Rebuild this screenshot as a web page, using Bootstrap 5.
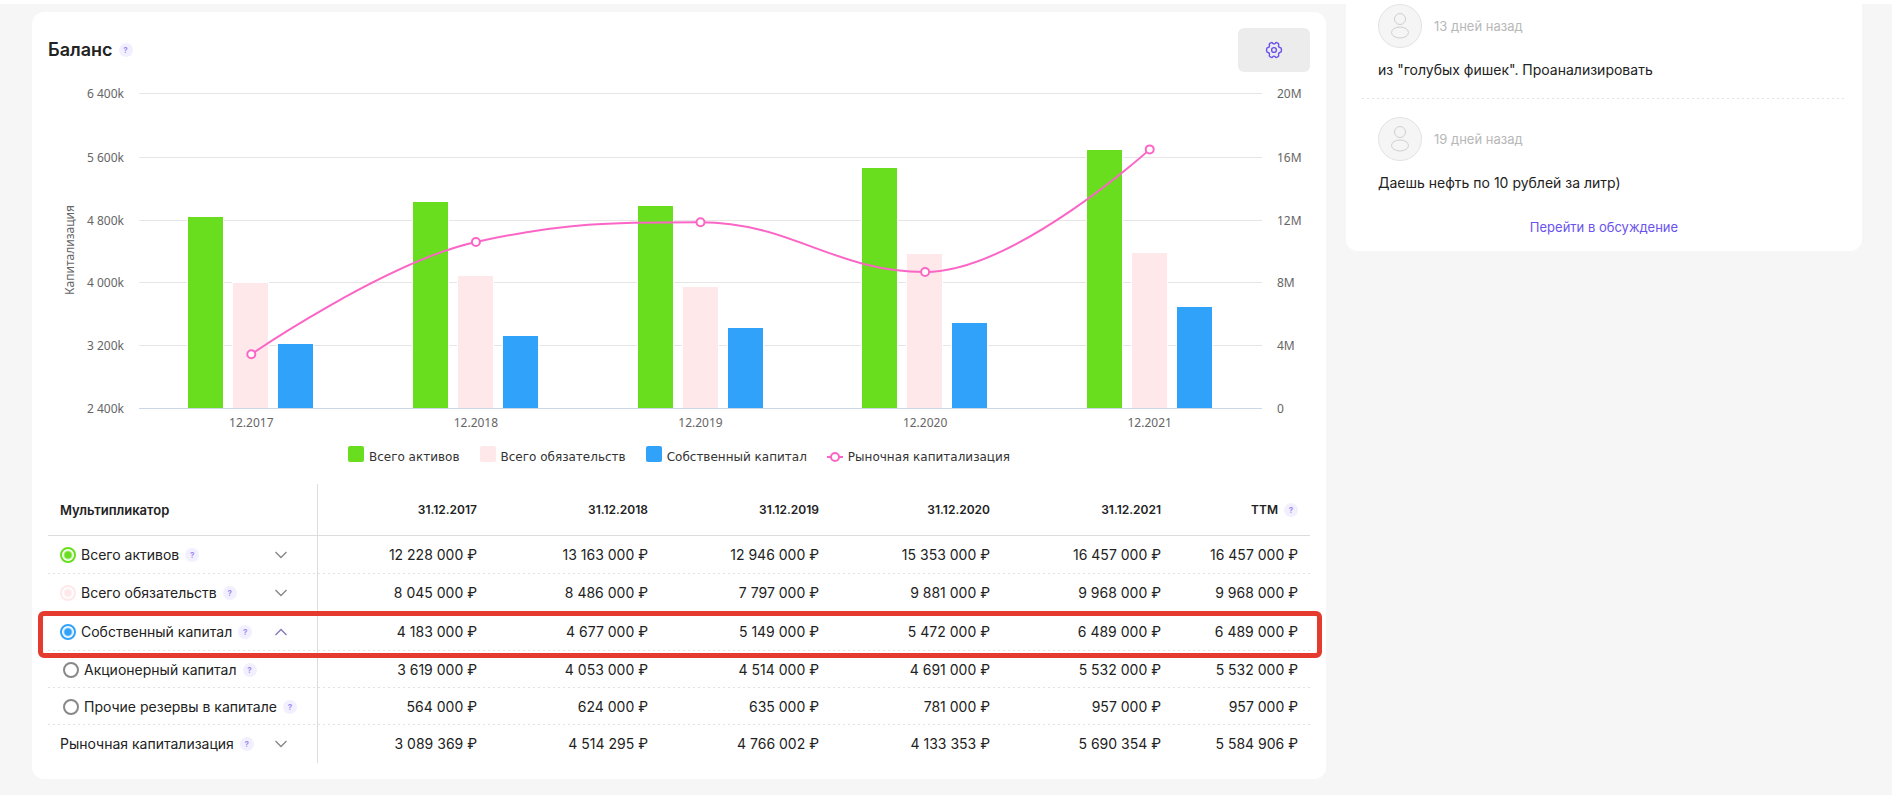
<!DOCTYPE html>
<html lang="ru">
<head>
<meta charset="utf-8">
<meta name="viewport" content="width=device-width, initial-scale=1">
<title>Баланс</title>
<link href="https://cdn.jsdelivr.net/npm/bootstrap@5.3.0/dist/css/bootstrap.min.css" rel="stylesheet">
<style>
  body { background: #f6f6f6; color: #222; font: 14px/20px Inter, "Open Sans", sans-serif; }
  .topline { height: 4px; background: #fff; }
  .page { padding: 0 30px 16px 32px; gap: 20px; }
  .panel { background: #fff; border-radius: 12px; }
  .balance { margin-top: 8px; padding: 16px; min-width: 0; }
  .comments { border-radius: 0 0 12px 12px; padding: 0 16px 14px; }
  @media (min-width: 1200px) { .comments { flex: 0 0 516px; } }
  .title { font-size: 18px; line-height: 24px; font-weight: 600; }
  .with-hint { gap: 6px; }
  .hint { width: 14px; height: 14px; padding: 0; border: 0; border-radius: 50%; background: #f2f0ff; color: #9c8bf5; font-size: 8px; line-height: 14px; font-weight: 700; flex: none; }
  .settings { width: 72px; height: 44px; background: #ececec; border: 0; border-radius: 6px; color: #6a52ee; padding: 0; }
  .chart { height: 367px; }
  .chart svg { display: block; width: 100%; height: 367px; font-family: "Noto Sans", sans-serif; font-size: 12px; fill: #666; }
  .legend { gap: 20px; height: 36px; color: #333; font: 500 12px/16px "DejaVu Sans", sans-serif; }
  .legend span { gap: 5px; }
  .legend i { width: 16px; height: 16px; border-radius: 2px; margin-bottom: 6px; }
  .green { --tone: #68de1e; } .pink { --tone: #ffe8ea; } .blue { --tone: #31a2f9; } .empty { --tone: #888; }
  .legend i { background: var(--tone); }

  .table-area { padding-top: 9px; }
  .figures { table-layout: fixed; width: 100%; border-collapse: separate; border-spacing: 0; }
  .figures .name-col { width: 270px; }
  .figures .ttm-col { width: 137px; }
  .figures th, .figures td { padding: 0 12px; text-align: right; font-weight: 400; white-space: nowrap; }
  .figures th:first-child { text-align: left; border-right: 1px solid #ddd; }
  .figures thead th { height: 52px; font-size: 12px; font-weight: 600; border-bottom: 1px solid #ddd; }
  .figures thead th:first-child { font-size: 13px; }
  .figures tbody tr { height: 38px; position: relative; background: repeating-linear-gradient(90deg, #e2e2e2 0 2px, transparent 2px 5px) left bottom / 100% 1px no-repeat; }
  .figures tbody tr.child-row { height: 37px; }
  .figures tbody tr:last-child { background: none; }
  .figures tbody tr.picked { height: 39px; }
  .frame { position: absolute; z-index: 2; inset: -1px -12px -7px -10px; border: 5px solid #e53b2f; border-radius: 6px; pointer-events: none; }
  .figures label { gap: 5px; }
  .child-row label { margin-left: 3px; }
  .dot { appearance: none; width: 16px; height: 16px; margin: 0; border: 2px solid var(--tone); border-radius: 50%; }
  .dot:checked { background: radial-gradient(circle, var(--tone) 3px, #fff 5px); }
  .toggle { border: 0; background: none; padding: 0; margin: 0 18px 0 auto; color: #888; line-height: 0; }
  .toggle.open { color: #8379b8; }

  .comment { padding: 0 16px 18px; }
  .comment + .comment { padding-top: 19px; background: repeating-linear-gradient(90deg, #e2e2e2 0 2px, transparent 2px 5px) left top / 100% 1px no-repeat; }
  .comment header { gap: 12px; }
  .comment p { margin: 12px 0 0; }
  .comment time { color: #b8b8b8; font-size: 13px; }
  .to-thread { padding-top: 6px; }
  .more { color: #6a52ee; font-size: 13px; text-decoration: none; }
</style>
</head>
<body>
<div class="topline"></div>
<main class="page d-flex flex-column flex-xl-row align-items-xl-start">
  <section class="panel balance flex-grow-1">
    <div class="d-flex align-items-center justify-content-between">
      <div class="with-hint d-flex align-items-center">
        <h2 class="title m-0">Баланс</h2>
        <button class="hint" type="button" aria-label="Подсказка">?</button>
      </div>
      <button class="settings d-flex align-items-center justify-content-center" type="button" aria-label="Настройки">
        <svg width="18" height="18" viewBox="0 0 18 18" fill="none" stroke="currentColor" stroke-width="1.4" stroke-linejoin="round"><path d="M5.9 1.8Q7 1.2 7.7 2.2Q9 3.6 10.3 2.2Q11 1.2 12.1 1.8L13.1 2.4Q14 3 13.6 4.1Q13.1 6 14.9 6.5Q16.4 6.7 16.4 7.9V10.1Q16.4 11.3 14.9 11.5Q13.1 12 13.6 13.9Q14 15 13.1 15.6L12.1 16.2Q11 16.8 10.3 15.8Q9 14.4 7.7 15.8Q7 16.8 5.9 16.2L4.9 15.6Q4 15 4.4 13.9Q4.9 12 3.1 11.5Q1.6 11.3 1.6 10.1V7.9Q1.6 6.7 3.1 6.5Q4.9 6 4.4 4.1Q4 3 4.9 2.4Z"/><circle cx="9" cy="9" r="2.4"/></svg>
      </button>
    </div>

    <div class="chart" id="chart"></div>
    <div class="legend d-flex flex-wrap justify-content-center align-items-center">
      <span class="d-flex align-items-center green"><i></i>Всего активов</span>
      <span class="d-flex align-items-center pink"><i></i>Всего обязательств</span>
      <span class="d-flex align-items-center blue"><i></i>Собственный капитал</span>
      <span class="d-flex align-items-center"><svg width="16" height="12" viewBox="0 0 16 12" fill="#fff" stroke="#fb65c6" stroke-width="2"><path d="M0 6h16"/><circle cx="8" cy="6" r="4"/></svg>Рыночная капитализация</span>
    </div>

    <div class="table-area">
    <table class="figures">
      <colgroup><col class="name-col"><col><col><col><col><col><col class="ttm-col"></colgroup>
      <thead><tr><th scope="col">Мультипликатор</th><th scope="col">31.12.2017</th><th scope="col">31.12.2018</th><th scope="col">31.12.2019</th><th scope="col">31.12.2020</th><th scope="col">31.12.2021</th><th scope="col"><span class="with-hint d-flex align-items-center justify-content-end">TTM <button class="hint" type="button" aria-label="Подсказка">?</button></span></th></tr></thead>
      <tbody id="rows"></tbody>
    </table>
    </div>
  </section>

  <aside class="panel comments">
    <article class="comment">
      <header class="d-flex align-items-center"><svg width="44" height="44" viewBox="0 0 44 44" fill="#f5f5f5" stroke="#e2e2e2"><circle cx="22" cy="22" r="21.5"/><g fill="none" stroke="#cfcfcf"><circle cx="22" cy="15" r="5.5"/><ellipse cx="22" cy="28.5" rx="8.5" ry="5.5"/></g></svg><time>13 дней назад</time></header>
      <p>из "голубых фишек". Проанализировать</p>
    </article>
    <article class="comment">
      <header class="d-flex align-items-center"><svg width="44" height="44" viewBox="0 0 44 44" fill="#f5f5f5" stroke="#e2e2e2"><circle cx="22" cy="22" r="21.5"/><g fill="none" stroke="#cfcfcf"><circle cx="22" cy="15" r="5.5"/><ellipse cx="22" cy="28.5" rx="8.5" ry="5.5"/></g></svg><time>19 дней назад</time></header>
      <p>Даешь нефть по 10 рублей за литр)</p>
    </article>
    <div class="to-thread text-center"><a class="more" href="#">Перейти в обсуждение</a></div>
  </aside>
</main>

<script src="https://cdn.jsdelivr.net/npm/bootstrap@5.3.0/dist/js/bootstrap.bundle.min.js"></script>
<script>
const rows = [
  { name: 'Всего активов', tone: 'green', on: true, toggle: 'down', v: [12228000, 13163000, 12946000, 15353000, 16457000, 16457000] },
  { name: 'Всего обязательств', tone: 'pink', on: true, toggle: 'down', v: [8045000, 8486000, 7797000, 9881000, 9968000, 9968000] },
  { name: 'Собственный капитал', tone: 'blue', on: true, toggle: 'up', cls: 'picked', v: [4183000, 4677000, 5149000, 5472000, 6489000, 6489000] },
  { name: 'Акционерный капитал', tone: 'empty', cls: 'child-row', v: [3619000, 4053000, 4514000, 4691000, 5532000, 5532000] },
  { name: 'Прочие резервы в капитале', tone: 'empty', cls: 'child-row', v: [564000, 624000, 635000, 781000, 957000, 957000] },
  { name: 'Рыночная капитализация', toggle: 'down', v: [3089369, 4514295, 4766002, 4133353, 5690354, 5584906] }
];
const spaced = n => String(n).replace(/\B(?=(\d{3})+$)/g, '\u00a0');

document.getElementById('rows').innerHTML = rows.map((r, i) => {
  const label = r.tone
    ? `<label class="d-flex align-items-center" for="s${i}"><input class="dot ${r.tone}" type="checkbox" id="s${i}"${r.on ? ' checked' : ''}>${r.name}</label>`
    : `<span>${r.name}</span>`;
  const arrow = r.toggle
    ? `<button class="toggle${r.toggle === 'up' ? ' open' : ''}" type="button" aria-label="Развернуть"><svg width="12" height="8" viewBox="0 0 12 8" fill="none" stroke="currentColor" stroke-width="1.4"><path d="${r.toggle === 'up' ? 'M.5 7L6 1.5L11.5 7' : 'M.5 1L6 6.5L11.5 1'}"/></svg></button>`
    : '';
  const frame = r.cls === 'picked' ? '<span class="frame"></span>' : '';
  return `<tr class="${r.cls || ''}"><th scope="row"><div class="with-hint d-flex align-items-center">${label}<button class="hint" type="button" aria-label="Подсказка">?</button>${arrow}</div>${frame}</th>${r.v.map(n => `<td>${spaced(n)} ₽</td>`).join('')}</tr>`;
}).join('');

function drawChart() {
  const box = document.getElementById('chart'), w = box.clientWidth;
  const left = 91, right = w - 48, top = 21, base = 336, step = (right - left) / 5;
  const ys = [21, 85, 148, 210, 273, 336];
  let s = '';
  ys.forEach((y, i) => {
    s += `<path d="M${left} ${y + .5}H${right}" stroke="${i === 5 ? '#ccd6eb' : '#e6e6e6'}"/>`;
    s += `<text x="76" y="${y + 5}" text-anchor="end">${['6 400k', '5 600k', '4 800k', '4 000k', '3 200k', '2 400k'][i]}</text>`;
    s += `<text x="${right + 15}" y="${y + 5}">${['20M', '16M', '12M', '8M', '4M', '0'][i]}</text>`;
  });
  s += `<text transform="translate(26 178) rotate(-90)" text-anchor="middle">Капитализация</text>`;
  const fills = ['#68de1e', '#ffe8ea', '#31a2f9'];
  const center = k => left + step * (k + .5);
  for (let b = 0; b < 3; b++) for (let k = 0; k < 5; k++) {
    const x = Math.round(center(k) + [-63, -18, 27][b]);
    const y = Math.round(base + 1.5 - rows[b].v[k] / 2e7 * (base - top));
    s += `<rect x="${x - 1}" y="${y - 1}" width="37" height="${base - y + 1}" fill="#fff"/><rect x="${x}" y="${y}" width="35" height="${base - y}" fill="${fills[b]}"/>`;
  }
  const p = rows[5].v.slice(0, 5).map((v, k) => ({ x: center(k), y: base + .5 - (v - 2.4e6) / 4e6 * (base - top) }));
  let d = `M${p[0].x} ${p[0].y}`, px = p[0].x, py = p[0].y;
  for (let k = 1; k < p.length; k++) {
    const a = p[k - 1], c = p[k], n = p[k + 1];
    let lx = c.x, ly = c.y, rx = c.x, ry = c.y;
    if (n) {
      lx = (1.5 * c.x + a.x) / 2.5; ly = (1.5 * c.y + a.y) / 2.5;
      rx = (1.5 * c.x + n.x) / 2.5; ry = (1.5 * c.y + n.y) / 2.5;
      const fix = (ry - ly) * (rx - c.x) / (rx - lx) + c.y - ry;
      ly += fix; ry += fix;
      if (ly > a.y && ly > c.y) { ly = Math.max(a.y, c.y); ry = 2 * c.y - ly; }
      else if (ly < a.y && ly < c.y) { ly = Math.min(a.y, c.y); ry = 2 * c.y - ly; }
      if (ry > n.y && ry > c.y) { ry = Math.max(n.y, c.y); ly = 2 * c.y - ry; }
      else if (ry < n.y && ry < c.y) { ry = Math.min(n.y, c.y); ly = 2 * c.y - ry; }
    }
    d += `C${px} ${py} ${lx} ${ly} ${c.x} ${c.y}`;
    px = rx; py = ry;
  }
  s += `<path d="${d}" fill="none" stroke="#fb65c6" stroke-width="2"/>`;
  p.forEach((q, k) => {
    s += `<circle cx="${q.x}" cy="${q.y}" r="4" fill="#fff" stroke="#fb65c6" stroke-width="2"/>`;
    s += `<text x="${q.x}" y="${base + 19}" text-anchor="middle">12.${2017 + k}</text>`;
  });
  box.innerHTML = `<svg role="img" aria-label="График баланса">${s}</svg>`;
}
drawChart();
addEventListener('resize', drawChart);
</script>
</body>
</html>
